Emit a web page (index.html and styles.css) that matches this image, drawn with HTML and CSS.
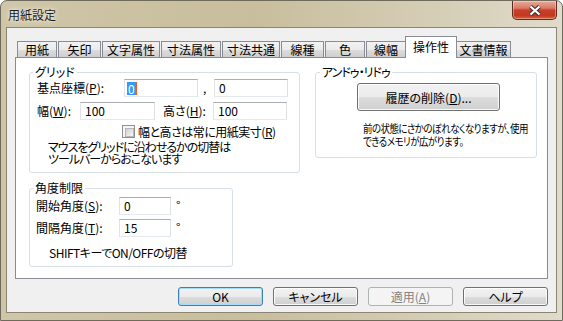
FILE: index.html
```html
<!DOCTYPE html>
<html lang="ja">
<head>
    <meta charset="UTF-8">
    <title>用紙設定</title>
    <link rel="stylesheet" href="styles.css">
</head>
<body>
    <div class="window">
        <div class="titlebar">
            <span class="title">用紙設定</span>
            <div class="close-btn">
                <svg width="14" height="11" viewBox="0 0 14 11">
                    <path d="M2.5 1.5 L11.5 9.5 M11.5 1.5 L2.5 9.5" stroke="#3a3030" stroke-width="4.2" fill="none"/>
                    <path d="M2.5 1.5 L11.5 9.5 M11.5 1.5 L2.5 9.5" stroke="#ffffff" stroke-width="2.2" fill="none"/>
                </svg>
            </div>
        </div>

        <div class="client">
            <div class="tabs">
                <div class="tab">用紙</div>
                <div class="tab">矢印</div>
                <div class="tab">文字属性</div>
                <div class="tab">寸法属性</div>
                <div class="tab">寸法共通</div>
                <div class="tab">線種</div>
                <div class="tab">色</div>
                <div class="tab">線幅</div>
                <div class="tab active">操作性</div>
                <div class="tab">文書情報</div>
            </div>

            <div class="panel">
                <div class="col-left">
                    <fieldset class="group group-grid">
                        <legend>グリッド</legend>
                        <div class="row">
                            <span class="lbl lbl-origin">基点座標(<u>P</u>):</span>
                            <div class="textbox tb-origin"><span class="sel">0</span><span class="caret"></span></div>
                            <span class="comma">,</span>
                            <div class="textbox tb-grid">0</div>
                        </div>
                        <div class="row row-gap">
                            <span class="lbl lbl-width">幅(<u>W</u>):</span>
                            <div class="textbox tb-size">100</div>
                            <span class="lbl lbl-height">高さ(<u>H</u>):</span>
                            <div class="textbox tb-grid">100</div>
                        </div>
                        <div class="check-row">
                            <span class="checkbox"></span>
                            <span class="check-label">幅と高さは常に用紙実寸(<u>R</u>)</span>
                        </div>
                        <p class="note">マウスをグリッドに沿わせるかの切替は<br>ツールバーからおこないます</p>
                    </fieldset>

                    <fieldset class="group group-angle">
                        <legend>角度制限</legend>
                        <div class="row">
                            <span class="lbl lbl-angle">開始角度(<u>S</u>):</span>
                            <div class="textbox tb-angle">0</div>
                            <span class="deg">°</span>
                        </div>
                        <div class="row row-gap-sm">
                            <span class="lbl lbl-angle">間隔角度(<u>T</u>):</span>
                            <div class="textbox tb-angle">15</div>
                            <span class="deg">°</span>
                        </div>
                        <p class="shift-note">SHIFTキーでON/OFFの切替</p>
                    </fieldset>
                </div>

                <fieldset class="group group-undo">
                    <legend>アンドゥ・リドゥ</legend>
                    <button class="btn btn-clear">履歴の削除(<u>D</u>)...</button>
                    <p class="undo-note">前の状態にさかのぼれなくなりますが、使用<br>できるメモリが広がります。</p>
                </fieldset>
            </div>

            <div class="buttons">
                <button class="btn btn-default">OK</button>
                <button class="btn">キャンセル</button>
                <button class="btn" disabled>適用(<u>A</u>)</button>
                <button class="btn">ヘルプ</button>
            </div>
        </div>
    </div>
</body>
</html>
```

FILE: styles.css
```css
* {
    box-sizing: border-box;
}
body {
    margin: 0;
    background: #ffffff;
    font-family: "Noto Sans CJK JP", "Liberation Sans", sans-serif;
    font-size: 12px;
    line-height: 12px;
    font-feature-settings: "palt";
    color: #000;
}
.window {
    width: 563px;
    height: 321px;
    border: 1px solid #6e6a5c;
    border-radius: 7px 7px 0 0;
    background: linear-gradient(to right, #cfc6a8 0%, #c8be9d 45%, #d6cfb8 80%, #e0dbca 100%);
    padding: 0 5px 7px 5px;
}
.titlebar {
    height: 26px;
    display: flex;
    align-items: flex-start;
}
.title {
    margin: 8px 0 0 2px;
    font-size: 12px;
    color: #1b1b1b;
    text-shadow: 0 0 6px rgba(255,255,255,0.9), 0 0 2px rgba(255,255,255,0.8);
}
.close-btn {
    margin-left: auto;
    width: 45px;
    height: 19px;
    border: 1px solid #5e2b22;
    border-top: none;
    border-radius: 0 0 5px 5px;
    background: linear-gradient(#e9a99b 0%, #d97a66 40%, #c8402a 50%, #c4371f 80%, #d8623f 100%);
    box-shadow: inset 0 0 0 1px rgba(255,255,255,0.35);
    display: flex;
    align-items: center;
    justify-content: center;
}
.client {
    height: 286px;
    border: 1px solid #8b8574;
    background: #f0f0f0;
    padding: 8px 8px 6px 8px;
}

/* tabs */
.tabs {
    height: 21px;
    display: flex;
    align-items: flex-end;
    padding-left: 2px;
}
.tab {
    height: 16px;
    margin-right: 1px;
    border: 1px solid #898c95;
    border-bottom: none;
    background: linear-gradient(#f2f2f2 0%, #ebebeb 50%, #dddddd 51%, #cfcfcf 100%);
    display: flex;
    align-items: center;
    justify-content: center;
    white-space: nowrap;
}
.tab:nth-child(1) { width: 40px; }
.tab:nth-child(2) { width: 43px; }
.tab:nth-child(3) { width: 58px; }
.tab:nth-child(4) { width: 60px; }
.tab:nth-child(5) { width: 58px; }
.tab:nth-child(6) { width: 43px; }
.tab:nth-child(7) { width: 40px; }
.tab:nth-child(8) { width: 40px; }
.tab:nth-child(10) { width: 55px; }
.tab.active {
    width: 52px;
    height: 22px;
    margin: 0 -1px -1px -2px;
    background: #ffffff;
    position: relative;
    z-index: 1;
    align-items: flex-start;
    padding-top: 4px;
}

/* panel */
.panel {
    height: 222px;
    border: 1px solid #898c95;
    background: #ffffff;
    display: flex;
    align-items: flex-start;
    padding: 8px 0 0 13px;
}
.col-left {
    width: 271px;
    margin-right: 15px;
}
.group {
    margin: 0;
    border: 1px solid #d5dfe5;
    border-radius: 3px;
    min-width: 0;
}
.group legend {
    padding: 0 2px;
    line-height: 12px;
}
.group-grid {
    padding: 1px 0 7px 7px;
}
.group-grid legend {
    margin-left: -4px;
}
.group-angle {
    width: 204px;
    margin-top: 9px;
    padding: 3px 0 7px 6px;
}
.group-angle legend {
    margin-left: -3px;
}
.group-undo {
    width: 222px;
    padding: 5px 0 9px 6px;
}
.group-undo legend {
    margin-left: -2px;
    letter-spacing: -1px;
}

.row {
    display: flex;
    align-items: center;
    height: 18px;
}
.row-gap {
    margin-top: 5px;
}
.row-gap-sm {
    margin-top: 4px;
}
.lbl {
    white-space: nowrap;
}
.lbl-origin { width: 87px; }
.lbl-width { width: 43px; }
.lbl-height { width: 50px; margin-left: 8px; }
.lbl-angle { width: 83px; }
.comma {
    width: 16px;
    padding-left: 5px;
}
.deg {
    margin-left: 5px;
    align-self: flex-start;
    margin-top: 2px;
}
.textbox {
    height: 18px;
    border: 1px solid #dbdfe6;
    border-top-color: #abadb3;
    border-left-color: #e2e3ea;
    border-bottom-color: #e3e9ef;
    background: #ffffff;
    padding-left: 4px;
    display: flex;
    align-items: center;
}
.tb-origin { width: 74px; padding-left: 2px; }
.tb-grid { width: 74px; }
.tb-size { width: 75px; }
.tb-angle { width: 52px; }
.sel {
    background: #3399ff;
    color: #ffffff;
    padding: 0 1px;
    line-height: 13px;
}
.caret {
    width: 1px;
    height: 13px;
    background: #e2631e;
}

.check-row {
    display: flex;
    align-items: center;
    height: 13px;
    margin-top: 5px;
    padding-left: 85px;
    white-space: nowrap;
}
.check-label {
    letter-spacing: -0.5px;
}
.checkbox {
    width: 13px;
    height: 13px;
    margin-right: 3px;
    border: 1px solid #8e8f8f;
    background: #f6f6f6;
    padding: 2px;
}
.checkbox::after {
    content: "";
    display: block;
    width: 7px;
    height: 7px;
    border: 1px solid #b5b5b5;
    background: linear-gradient(135deg, #cfcfcf, #f7f7f7);
}
.note {
    margin: 3px 0 0 11px;
    line-height: 12px;
    white-space: nowrap;
    letter-spacing: -1px;
}
.shift-note {
    margin: 10px 0 0 13px;
    line-height: 12px;
    letter-spacing: -0.5px;
}
.undo-note {
    margin: 11px 0 0 41px;
    font-size: 11px;
    line-height: 13px;
    white-space: nowrap;
    letter-spacing: -0.6px;
    transform: scaleX(0.86);
    transform-origin: left top;
}

/* buttons */
.btn {
    font-family: inherit;
    font-size: 12px;
    font-feature-settings: "palt";
    color: #000;
    width: 85px;
    height: 19px;
    padding: 0;
    border: 1px solid #707070;
    border-radius: 3px;
    background: linear-gradient(#f2f2f2 0%, #ebebeb 50%, #dddddd 51%, #cfcfcf 100%);
    box-shadow: inset 0 0 0 1px rgba(255,255,255,0.85);
}
.btn-clear {
    width: 143px;
    height: 28px;
    margin-left: 35px;
    display: block;
}
.btn-default {
    border-color: #3c7fb1;
    box-shadow: inset 0 0 0 1px #a8dcf6;
}
.btn:disabled {
    border-color: #adb2b5;
    background: #f4f4f4;
    color: #838383;
    box-shadow: none;
}
.buttons {
    display: flex;
    justify-content: flex-end;
    gap: 10px;
    margin-top: 8px;
}
```
